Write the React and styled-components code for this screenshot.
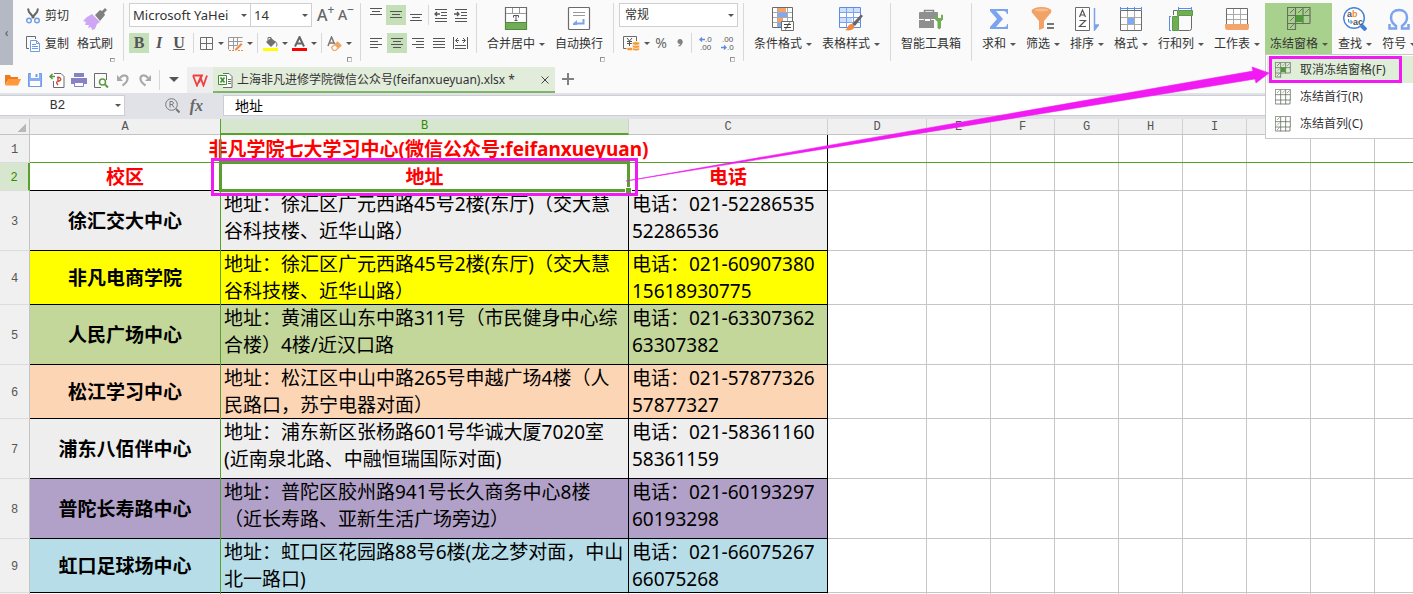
import React, { useState } from "react";
import styled, { createGlobalStyle } from "styled-components";

const fonts = [
  { label: "Microsoft YaHei", width: 122 },
  { label: "14", width: 62 },
];

const columns = [
  { name: "A", width: 191 },
  { name: "B", width: 408 },
  { name: "C", width: 199 },
  { name: "D", width: 99 },
  { name: "E", width: 64 },
  { name: "F", width: 64 },
  { name: "G", width: 64 },
  { name: "H", width: 64 },
  { name: "I", width: 64 },
  { name: "J", width: 64 },
  { name: "K", width: 64 },
  { name: "L" },
];

const extraColumns = columns.slice(3);

const centers = [
  {
    name: "徐汇交大中心",
    address: ["地址：徐汇区广元西路45号2楼(东厅)（交大慧", "谷科技楼、近华山路）"],
    phone: ["电话：021-52286535", "52286536"],
    color: "#eeeeee",
    height: 60,
  },
  {
    name: "非凡电商学院",
    address: ["地址：徐汇区广元西路45号2楼(东厅)（交大慧", "谷科技楼、近华山路）"],
    phone: ["电话：021-60907380", "15618930775"],
    color: "#ffff00",
    height: 54,
  },
  {
    name: "人民广场中心",
    address: ["地址：黄浦区山东中路311号（市民健身中心综", "合楼）4楼/近汉口路"],
    phone: ["电话：021-63307362", "63307382"],
    color: "#c4d79b",
    height: 60,
  },
  {
    name: "松江学习中心",
    address: ["地址：松江区中山中路265号申越广场4楼（人", "民路口，苏宁电器对面）"],
    phone: ["电话：021-57877326", "57877327"],
    color: "#fcd5b4",
    height: 54,
  },
  {
    name: "浦东八佰伴中心",
    address: ["地址：浦东新区张杨路601号华诚大厦7020室", "(近南泉北路、中融恒瑞国际对面)"],
    phone: ["电话：021-58361160", "58361159"],
    color: "#eeeeee",
    height: 60,
  },
  {
    name: "普陀长寿路中心",
    address: ["地址：普陀区胶州路941号长久商务中心8楼", "（近长寿路、亚新生活广场旁边）"],
    phone: ["电话：021-60193297", "60193298"],
    color: "#b1a0c7",
    height: 60,
  },
  {
    name: "虹口足球场中心",
    address: ["地址：虹口区花园路88号6楼(龙之梦对面，中山", "北一路口)"],
    phone: ["电话：021-66075267", "66075268"],
    color: "#b7dee8",
    height: 54,
  },
];

/* ---------- icons ---------- */

const Icon = ({ size = 16, height, children }) => (
  <svg
    width={size}
    height={height || size}
    viewBox={`0 0 ${size} ${height || size}`}
    fill="none"
    stroke="#6b6b6b"
    strokeWidth="1"
    aria-hidden="true"
  >
    {children}
  </svg>
);

const CutIcon = () => (
  <Icon size={14} height={16}>
    <path d="M2 .5 3 4l5 6M12 .5 11 4l-5 6" stroke="#666" strokeWidth="2" />
    <circle cx="3" cy="12.5" r="2.3" stroke="#6f9be8" strokeWidth="1.4" />
    <circle cx="11" cy="12.5" r="2.3" stroke="#6f9be8" strokeWidth="1.4" />
  </Icon>
);

const CopyIcon = () => (
  <Icon size={14} height={16}>
    <path d="M3 12.500H.5V.5H9.500V3" />
    <path d="M4.500 4.500h6l3 3v8h-9z" fill="#fff" stroke="#6f9be8" />
    <path d="M10.500 4.500v3h3M6 8.500h4M6 10.500h6M6 12.500h6" stroke="#6f9be8" />
  </Icon>
);

const BrushIcon = () => (
  <Icon size={24}>
    <path d="m12 8 5-5 2 1 3-3 2 2-3 3 1 2-5 6z" fill="#808080" stroke="none" />
    <path d="m9 7 8 8-3 2-2 5-3 1-1-3-3 1 1-3-4 0 1-3-3-1 4-4z" fill="#cfa6f5" stroke="none" />
  </Icon>
);

const BordersIcon = () => (
  <Icon size={15}>
    <path d="M1.500 1.500h12v12h-12zM7.500 1.500v12M1.500 7.500h12" />
  </Icon>
);

const DrawBorderIcon = () => (
  <Icon size={15}>
    <path d="M.5 13.500V1.500h14M.5 5.500h14M.5 9.500h9M5.500 1.500v12M9.500 1.500v8" stroke="#999" />
    <path d="m7 13 6-6 1.500 1.500-6 6H7z" fill="#f08a4b" stroke="none" />
    <path d="M1 14.500h5M10 14.500h5" stroke="#f08a4b" strokeDasharray="2 1" />
  </Icon>
);

const FillIcon = () => (
  <Icon size={15}>
    <path d="m3 6 5-4 5 4-5 5z" fill="#707070" stroke="none" />
    <path d="M5 5V1.500h3V5M12.500 5.500c1 1 2 3 1 5" stroke="#707070" />
    <path d="M0 13.500h15" stroke="#ff0" strokeWidth="3" />
  </Icon>
);

const FontColorIcon = () => (
  <Icon size={15}>
    <path d="M3 10.500 7.500 1l4.500 9.500M4.500 7.500h6" stroke="#666" strokeWidth="2" />
    <path d="M0 13.500h15" stroke="#f00" strokeWidth="3" />
  </Icon>
);

const EraserIcon = () => (
  <Icon size={15}>
    <path d="M1 10 4.500 1l3 7M2.500 7h4" stroke="#777" strokeWidth="1.500" />
    <path d="m4.500 11.500 6-5.500 3.500 3.500-5.500 5h-2z" fill="#fff" stroke="#f0a560" strokeWidth="1.200" />
    <path d="m7.500 9 3-3 3.500 3.500-3 3z" fill="#f0a560" stroke="none" />
  </Icon>
);

const LinesIcon = ({ rows }) => (
  <Icon size={14} height={14}>
    {rows.map(([x, y, w]) => (
      <path key={y} d={`M${x} ${y}.5h${w}`} stroke="#555" />
    ))}
  </Icon>
);

const topLines = [[1, 0, 12], [3, 3, 8], [1, 6, 12]];
const middleLines = [[1, 3, 12], [3, 6, 8], [1, 9, 12]];
const bottomLines = [[1, 6, 12], [3, 9, 8], [1, 12, 12]];
const leftLines = [[1, 2, 12], [1, 5, 8], [1, 8, 12], [1, 11, 8]];
const centerLines = [[1, 2, 12], [3, 5, 8], [1, 8, 12], [3, 11, 8]];
const rightLines = [[1, 2, 12], [5, 5, 8], [1, 8, 12], [5, 11, 8]];
const justifyLines = [[1, 2, 12], [1, 5, 12], [1, 8, 12], [1, 11, 12]];

const IndentIcon = ({ right }) => (
  <Icon size={14} height={14}>
    <path d="M1 1.500h12M7 4.500h6M7 7.500h6M1 10.500h12M1 13.500h12" stroke="#555" />
    <path d={right ? "M0 6h5M3 4l2 2-2 2" : "M6 6H1M3 4 1 6l2 2"} stroke="#555" strokeWidth="1.300" />
  </Icon>
);

const DistributeIcon = () => (
  <Icon size={15} height={14}>
    <path d="M.5 1v12M14.500 1v12M3 4.500h3M9 4.500h3M5 2 2.500 4.500 5 7M10 2l2.500 2.500L10 7M2 9.500h11M2 12.500h11" stroke="#555" />
  </Icon>
);

const MergeIcon = () => (
  <Icon size={24}>
    <path d="M1.500.5h21v22h-21z" fill="#fff" strokeWidth="1.200" />
    <path d="M2 6.500h20M8.500 1v5M15.500 1v5" stroke="#999" />
    <path d="M9.500 10.500v-2h5v2M12 8.500v5M10.500 13.500h3" stroke="#555" />
    <path d="M1.500 15.500h21v7h-21z" fill="#70ad56" stroke="#4c8f38" />
  </Icon>
);

const WrapIcon = () => (
  <Icon size={24}>
    <rect x="1.500" y=".5" width="21" height="22" rx="1" fill="#fff" strokeWidth="1.200" />
    <path d="M6 5.500h12M6 8.500h12" stroke="#999" />
    <path d="M16.500 12v4.500H10" stroke="#7ba3ee" strokeWidth="2" />
    <path d="M6 16.500l4-3.500v5H6z" fill="#7ba3ee" stroke="none" />
  </Icon>
);

const CurrencyIcon = () => (
  <Icon size={17}>
    <path d="M13.500 6V1.500H.5v12H5" />
    <path d="m4 3 2.500 3L9 3M6.500 6v5M4 6.500h5M4 8.500h5" stroke="#555" />
    <g fill="#f29a38" stroke="#fff" strokeWidth=".7">
      <ellipse cx="7" cy="14" rx="3.500" ry="1.800" />
      <ellipse cx="13" cy="14" rx="3.700" ry="1.900" />
      <ellipse cx="13" cy="11.500" rx="3.700" ry="1.900" />
      <ellipse cx="13" cy="8.500" rx="3.700" ry="1.900" />
    </g>
  </Icon>
);

const CommaIcon = () => (
  <Icon size={6} height={10}>
    <circle cx="3" cy="3.500" r="2.500" fill="#808080" stroke="none" />
    <path d="M5 3.500q0 3.500-3.500 4.500" stroke="#808080" strokeWidth="1.300" />
  </Icon>
);

const DecimalIcon = ({ more }) => (
  <Icon size={13} height={16}>
    <g fill="#555" stroke="none" fontFamily="Liberation Sans" fontSize="8">
      <text x={more ? 6 : 1} y="7">{more ? ".0" : ".00"}</text>
      <text x={more ? 1 : 6} y="15">{more ? ".00" : ".0"}</text>
    </g>
    <path
      d={more ? "M6 4.500H1M3 2.500l-2 2 2 2" : "M0 12.500h5M3 10.500l2 2-2 2"}
      stroke="#5b8de8"
      strokeWidth="1.300"
    />
  </Icon>
);

const ConditionIcon = () => (
  <Icon size={24}>
    <path d="M1.500.5h20v20h-20z" fill="#fff" />
    <path d="M7 1h8v5H7z" fill="#f3a268" stroke="none" />
    <path d="M7 6h9v5H7z" fill="#7fa9f5" stroke="none" />
    <path d="M7 11h5v5H7z" fill="#f3a268" stroke="none" />
    <path d="M7 16h4v4H7z" fill="#7fa9f5" stroke="none" />
    <path d="M6.500 1v19M16.500 1v19M2 5.500h19M2 10.500h19M2 15.500h19" stroke="#aaa" />
    <path d="M10.500 14.500h12v9h-12z" fill="#fff" />
    <path d="M13 17.500h7M13 20.500h7M18.500 15.500l-4 7" stroke="#444" />
  </Icon>
);

const TableStyleIcon = () => (
  <Icon size={24}>
    <path d="M.5.5h21v20H.5z" fill="#fff" stroke="#5b8de8" />
    <path d="M1 1h20v5H1zM1 11h12v5H1z" fill="#cfdffb" stroke="none" />
    <path d="M7.500 1v19M14.500 1v19M1 5.500h20M1 10.500h20M1 15.500h20" stroke="#7ba3ee" />
    <path d="m13 17 9-9.500 2 1.500-8 10z" fill="#666" stroke="none" />
    <path d="M12 17c2 0 4 1 3 4-1 2-5 3-9 2 3-1 2-5 6-6z" fill="#ee8a44" stroke="none" />
  </Icon>
);

const ToolboxIcon = () => (
  <Icon size={24}>
    <path d="M5.500 6V3.500h9V6" strokeWidth="1.500" stroke="#888" />
    <path d="M0 6q0-1 1-1h17q1 0 1 1v6H0zM0 13h15v8H0z" fill="#8f8f8f" stroke="none" />
    <path d="M5.500 11.500h6v3h-6z" fill="#fff" stroke="#8f8f8f" />
    <path d="M16.500 8v4.500l2.500 2v6.500q1.200 1.500 2.500 0v-6.500l2-2V8h-1v3.500h-4.500V8z" fill="#70ad56" stroke="#70ad56" />
  </Icon>
);

const SumIcon = () => (
  <Icon size={24}>
    <path d="M3 2h18v5h-1c-1-3-2-3-5-3H9l7 8-7 8h6c3 0 5 0 5-3h1v5H3v-2l7-8-7-8z" fill="#7ba3ee" stroke="none" />
  </Icon>
);

const FilterIcon = () => (
  <Icon size={24}>
    <ellipse cx="10.500" cy="4" rx="10" ry="4" fill="#f0a267" stroke="none" />
    <path d="M.5 5 8 14v9l5-2v-7l7.500-9z" fill="#f0a267" stroke="none" />
    <ellipse cx="10.500" cy="3" rx="7" ry="1.500" fill="#f7bd8e" stroke="none" />
    <path d="M16 17h7M16 21h7" stroke="#777" strokeWidth="2" />
  </Icon>
);

const SortIcon = () => (
  <Icon size={24}>
    <path d="M.5.5h14v23H.5z" fill="#fff" />
    <path d="m4.500 10 3-7 3 7M5.500 8h4M4.500 13.500h6l-6 6h6.500" stroke="#555" strokeWidth="1.200" />
    <path d="M19.500 1v22l4-5h-4" stroke="#7ba3ee" strokeWidth="1.500" fill="#7ba3ee" />
  </Icon>
);

const FormatIcon = () => (
  <Icon size={24}>
    <path d="M1.500 3.500h21v20h-21z" fill="#fff" />
    <path d="M8.500 4v19M15.500 4v19M2 10.500h20M2 17.500h20" stroke="#aaa" />
    <path d="M9 11h6v6H9z" fill="#7fa9f5" stroke="none" />
    <path d="M1 1.500h22M1.500 0v3M8.500 0v3M15.500 0v3M22.500 0v3" stroke="#5b8de8" />
  </Icon>
);

const RowColIcon = () => (
  <Icon size={24}>
    <path d="M8 3.500H4.500V8M22.500 9v12.500q0 2-2 2H10" />
    <path d="M8.500 3.500h15v5h-15zM3.500 9.500h6v14h-6z" fill="#70ad56" stroke="#5d9c43" />
    <path d="M9 1.500h14M9.500 0v3M22.500 0v3M.5 9v14M0 9.500h2M0 23.500h2" stroke="#5b8de8" />
  </Icon>
);

const WorksheetIcon = () => (
  <Icon size={24}>
    <path d="M1.500 1.500h21v19h-21z" fill="#fff" />
    <path d="M8.500 2v16M15.500 2v16M2 7.500h20M2 12.500h20" stroke="#aaa" />
    <path d="M0 17h24v3q0 3-2 3H2q-2 0-2-3z" fill="#f3a56e" stroke="none" />
  </Icon>
);

const FreezeIcon = ({ size = 24, rows = true, cols = true, mark = true }) => (
  <svg width={size} height={size} viewBox="0 0 24 24" fill="none" stroke="#66705f" strokeWidth="1.200" aria-hidden="true">
    <path d="M23 16.500V.5H.5v22H9M9 16.500h14M.5 8.500h22M.5 16.500H9M8.500 1v22M16 1v16" />
    {rows && <path d="m3 6 4-4M11 6l4-4M18 6l4-4" strokeWidth=".9" />}
    {cols && <path d="m3 14 4-4M3 21l4-4M3 6l4-4" strokeWidth=".9" />}
    {!mark && <path d="M9 22.500h13.500V16M16 17v6" />}
    {mark && <path d="M9 8h7v7H9z" fill="#4f9a38" stroke="none" />}
  </svg>
);

const FindIcon = () => (
  <Icon size={24}>
    <path d="m18 18 5 5" stroke="#3f7fdc" strokeWidth="4" />
    <circle cx="11" cy="11" r="10.300" fill="#fff" stroke="#4a86dc" strokeWidth="1.500" />
    <g stroke="none" fontFamily="Liberation Sans" fontWeight="bold" fontSize="9">
      <text x="4" y="10" fill="#555">a</text>
      <text x="9" y="10" fill="#ee8a44">b</text>
      <text x="10" y="18" fill="#555">ac</text>
    </g>
    <path d="M5.500 12v3H9M7.500 13l2 2-2 2" stroke="#4a86dc" />
  </Icon>
);

const SymbolIcon = () => (
  <Icon size={24}>
    <path d="M2.500 17v4.500H9V19C5 16 4 13.500 4 10.500 4 6 7 3 12 3s8 3 8 7.500c0 3-1 5.500-5 8.500v2.500h6.500V17" stroke="#7ba3ee" strokeWidth="2.500" />
  </Icon>
);

const OpenIcon = () => (
  <Icon>
    <path d="M0 13V3h5l1 2h7v2H4z" fill="#ee7a1c" stroke="none" />
    <path d="M0 13.500 4 7h12l-3 6.500z" fill="#ff9838" stroke="none" />
  </Icon>
);

const SaveIcon = () => (
  <Icon>
    <path d="M1.500 1.500h13v13h-13z" fill="#8ab0f2" stroke="#6f9be8" />
    <path d="M4 1h8v5H4zM3 9h10v5H3z" fill="#fff" stroke="none" />
    <path d="M9.500 2v3" stroke="#6f9be8" strokeWidth="2" />
  </Icon>
);

const PdfIcon = () => (
  <Icon>
    <path d="M5 1.500h7l3 3v11H4.500V9" fill="#fff" />
    <path d="M8 5.500c4-1 5 3 2 3.500S7 11 9 13M9 6v4" stroke="#d04a3c" strokeWidth="1.400" />
    <path d="M6 4.500H1M3.500 2 1 4.500 3.500 7" stroke="#4f9a38" strokeWidth="1.500" />
  </Icon>
);

const PrintIcon = () => (
  <Icon>
    <path d="M3 1h10v4H3zM0 6h16v6H0z" fill="#8782c4" stroke="none" />
    <path d="M3.500 10.500h9v4h-9z" fill="#fff" stroke="#8782c4" />
    <path d="M3 5.500h10" stroke="#fff" />
  </Icon>
);

const PreviewIcon = () => (
  <Icon>
    <path d="M13.500 8V1.500h-12v14H8" />
    <circle cx="9.500" cy="10" r="3" fill="#fff" stroke="#5d9c43" strokeWidth="1.500" />
    <path d="m12 12.500 3 3" stroke="#5d9c43" strokeWidth="2" />
  </Icon>
);

const UndoIcon = ({ flip }) => (
  <Icon>
    <g transform={flip ? "matrix(-1 0 0 1 16 0)" : undefined}>
      <path d="M5 6c3-4 8-3 7.500 1-.3 3-2 4.500-5 6.500" stroke="#a8a8a8" strokeWidth="2.200" />
      <path d="M2 3v6h6z" fill="#a8a8a8" stroke="none" />
    </g>
  </Icon>
);

const WpsIcon = () => (
  <Icon size={16} height={13}>
    <path d="m1 1.500 4 10 3.500-8 3 8 3.500-10M1 1.500h9l-3 7" stroke="#ee4040" strokeWidth="1.800" />
  </Icon>
);

const SheetFileIcon = () => (
  <Icon size={15}>
    <path d="M5 .5h6l3 3v11H5" fill="#fff" />
    <path d="M10 6.500h3M10 8.500h3M10 10.500h3" />
    <path d="M.5 2.500h8v9h-8z" fill="#fff" stroke="#3f8f32" />
    <path d="m2.500 4.500 4 5M6.500 4.500l-4 5" stroke="#3f8f32" strokeWidth="1.700" />
  </Icon>
);

const LookupIcon = () => (
  <Icon size={15}>
    <circle cx="6.500" cy="6.500" r="5.800" stroke="#777" />
    <path d="m11 11 3.500 3.500" stroke="#777" strokeWidth="2" />
    <path d="M5 9.500v-6h2.500q2 1.500 0 3H5M7 6.500l2 3" stroke="#777" />
  </Icon>
);

const CloseIcon = () => (
  <Icon size={8}>
    <path d="m.5.5 7 7M7.500.5l-7 7" stroke="#444" />
  </Icon>
);

const PlusIcon = () => (
  <Icon size={12}>
    <path d="M6 0v12M0 6h12" stroke="#808080" strokeWidth="2" />
  </Icon>
);

/* ---------- parts ---------- */

const actions = [
  { label: "求和", icon: <SumIcon /> },
  { label: "筛选", icon: <FilterIcon /> },
  { label: "排序", icon: <SortIcon /> },
  { label: "格式", icon: <FormatIcon /> },
  { label: "行和列", icon: <RowColIcon /> },
  { label: "工作表", icon: <WorksheetIcon /> },
];

const quickActions = [
  { label: "打开", icon: <OpenIcon /> },
  { label: "保存", icon: <SaveIcon /> },
  { label: "输出为PDF", icon: <PdfIcon /> },
  { label: "打印", icon: <PrintIcon /> },
  { label: "打印预览", icon: <PreviewIcon /> },
  { label: "撤销", icon: <UndoIcon /> },
  { label: "恢复", icon: <UndoIcon flip /> },
];

const Action = ({ label, icon, caret = true, active, onClick }) => (
  <LargeButton type="button" $active={active} onClick={onClick}>
    {icon}
    <LargeLabel>
      {label}
      {caret && <Caret />}
    </LargeLabel>
  </LargeButton>
);

const Split = ({ label, children }) => (
  <SplitButton type="button" aria-label={label}>
    {children}
    <Caret />
  </SplitButton>
);

const Dropdown = ({ label, value, width, indent, large }) => (
  <SelectBox $width={width}>
    <Select aria-label={label} defaultValue={value} $indent={indent} $large={large}>
      <option>{value}</option>
    </Select>
    <SelectCaret />
  </SelectBox>
);

const Ribbon = () => {
  const [menuOpen, setMenuOpen] = useState(true);

  return (
    <RibbonBar>
      <Collapse type="button" aria-label="折叠">‹</Collapse>
      <Group $width={110}>
        <Clipboard>
          <ClipColumn>
            <ClipButton type="button"><CutIcon />剪切</ClipButton>
            <ClipButton type="button"><CopyIcon />复制</ClipButton>
          </ClipColumn>
          <Action label="格式刷" icon={<BrushIcon />} caret={false} />
        </Clipboard>
        <Launcher />
      </Group>
      <Divider />

      <Group $width={236}>
        <ToolRow $top>
          <FontSelects>
            {fonts.map((font) => (
              <Dropdown
                key={font.label}
                label={font.label === "14" ? "字号" : "字体"}
                value={font.label}
                width={font.width}
                indent={3}
                large
              />
            ))}
          </FontSelects>
          <SizeButton type="button" aria-label="增大字号">A<sup>+</sup></SizeButton>
          <SizeButton type="button" aria-label="减小字号" $small>A<sup>−</sup></SizeButton>
        </ToolRow>
        <ToolRow $gap={4}>
          <Tools>
            <Tool type="button" $active $letter><b>B</b></Tool>
            <Tool type="button" $letter><i>I</i></Tool>
            <Tool type="button" $letter><u>U</u></Tool>
          </Tools>
          <ShortDivider />
          <Split label="边框"><BordersIcon /></Split>
          <Split label="绘制边框"><DrawBorderIcon /></Split>
          <ShortDivider />
          <Split label="填充颜色"><FillIcon /></Split>
          <Split label="字体颜色"><FontColorIcon /></Split>
          <ShortDivider />
          <Split label="清除"><EraserIcon /></Split>
        </ToolRow>
        <Launcher />
      </Group>
      <Divider />

      <Group $width={115}>
        <ToolRow $top>
          <Tools>
            <Tool type="button" aria-label="顶端对齐"><LinesIcon rows={topLines} /></Tool>
            <Tool type="button" aria-label="垂直居中" $active><LinesIcon rows={middleLines} /></Tool>
            <Tool type="button" aria-label="底端对齐"><LinesIcon rows={bottomLines} /></Tool>
          </Tools>
          <ShortDivider $spaced />
          <Tools>
            <Tool type="button" aria-label="减少缩进"><IndentIcon /></Tool>
            <Tool type="button" aria-label="增加缩进"><IndentIcon right /></Tool>
          </Tools>
        </ToolRow>
        <ToolRow>
          <Tools $gap={1}>
            <Tool type="button" aria-label="左对齐"><LinesIcon rows={leftLines} /></Tool>
            <Tool type="button" aria-label="水平居中" $active><LinesIcon rows={centerLines} /></Tool>
            <Tool type="button" aria-label="右对齐"><LinesIcon rows={rightLines} /></Tool>
            <Tool type="button" aria-label="两端对齐"><LinesIcon rows={justifyLines} /></Tool>
            <Tool type="button" aria-label="分散对齐"><DistributeIcon /></Tool>
          </Tools>
        </ToolRow>
      </Group>
      <Divider $short />

      <Group $width={136}>
        <Actions>
          <Action label="合并居中" icon={<MergeIcon />} />
          <Action label="自动换行" icon={<WrapIcon />} caret={false} />
        </Actions>
        <Launcher />
      </Group>
      <Divider $short />

      <Group $width={129}>
        <ToolRow $top>
          <Dropdown label="数字格式" value="常规" width={119} indent={5} />
        </ToolRow>
        <NumberRow>
          <Split label="货币"><CurrencyIcon /></Split>
          <NumberButton type="button">%</NumberButton>
          <NumberButton type="button" aria-label="千位分隔"><CommaIcon /></NumberButton>
          <ShortDivider />
          <NumberButton type="button" aria-label="增加小数位数" $wide><DecimalIcon more /></NumberButton>
          <NumberButton type="button" aria-label="减少小数位数" $wide><DecimalIcon /></NumberButton>
        </NumberRow>
        <Launcher />
      </Group>
      <Divider />

      <Group $width={146}>
        <Actions>
          <Action label="条件格式" icon={<ConditionIcon />} />
          <Action label="表格样式" icon={<TableStyleIcon />} />
        </Actions>
      </Group>
      <Divider />

      <Group $width={80}>
        <Actions>
          <Action label="智能工具箱" icon={<ToolboxIcon />} caret={false} />
        </Actions>
      </Group>
      <Divider />

      <Actions>
        {actions.map((item) => (
          <Action key={item.label} label={item.label} icon={item.icon} />
        ))}
        <MenuAnchor>
          <Action
            label="冻结窗格"
            icon={<FreezeIcon />}
            active
            onClick={() => setMenuOpen(!menuOpen)}
          />
          {menuOpen && (
            <Menu>
              <MenuItem type="button" $active>
                <FreezeIcon size={16} />取消冻结窗格(F)
              </MenuItem>
              <MenuItem type="button">
                <FreezeIcon size={16} cols={false} mark={false} />冻结首行(R)
              </MenuItem>
              <MenuItem type="button">
                <FreezeIcon size={16} rows={false} mark={false} />冻结首列(C)
              </MenuItem>
            </Menu>
          )}
        </MenuAnchor>
        <Action label="查找" icon={<FindIcon />} />
        <Action label="符号" icon={<SymbolIcon />} />
      </Actions>
    </RibbonBar>
  );
};

const TabBar = () => (
  <Tabs>
    <QuickBar>
      {quickActions.map((item) => (
        <IconButton key={item.label} type="button" aria-label={item.label}>
          {item.icon}
        </IconButton>
      ))}
      <ShortDivider />
    </QuickBar>
    <MoreButton type="button" aria-label="更多"><Caret $large /></MoreButton>
    <HomeTab type="button" aria-label="首页"><WpsIcon /></HomeTab>
    <FileTab>
      <SheetFileIcon />
      <FileName>上海非凡进修学院微信公众号(feifanxueyuan).xlsx *</FileName>
      <IconButton type="button" aria-label="关闭"><CloseIcon /></IconButton>
    </FileTab>
    <IconButton type="button" aria-label="新建"><PlusIcon /></IconButton>
  </Tabs>
);

const FormulaBar = () => (
  <Formula>
    <NameBox>
      <NameInput aria-label="名称框" defaultValue="B2" />
      <Caret />
    </NameBox>
    <FormulaTools>
      <IconButton type="button" aria-label="查找函数"><LookupIcon /></IconButton>
      <FxButton type="button">fx</FxButton>
    </FormulaTools>
    <FormulaInput aria-label="编辑栏" defaultValue="地址" />
  </Formula>
);

const Lines = ({ lines }) => (
  <CellText>
    {lines.map((line) => (
      <span key={line}>{line}</span>
    ))}
  </CellText>
);

const BlankCells = () => extraColumns.map((col) => <Blank key={col.name} />);

const Sheet = () => (
  <SheetArea>
    <Grid>
      <colgroup>
        <RowHeadCol />
        {columns.map((col) => (
          <Col key={col.name} $width={col.width} />
        ))}
      </colgroup>
      <thead>
        <Row $height={16}>
          <Corner aria-label="全选" />
          {columns.map((col) => (
            <ColHead key={col.name} scope="col" $active={col.name === "B"}>
              {col.name}
            </ColHead>
          ))}
        </Row>
      </thead>
      <tbody>
        <Row $height={28}>
          <RowHead scope="row">1</RowHead>
          <TitleCell colSpan={3}>非凡学院七大学习中心(微信公众号:feifanxueyuan)</TitleCell>
          <BlankCells />
        </Row>
        <Row $height={28}>
          <RowHead scope="row" $active>2</RowHead>
          <TitleCell>校区</TitleCell>
          <SelectedCell>地址<FillHandle /></SelectedCell>
          <TitleCell>电话</TitleCell>
          <BlankCells />
        </Row>
        {centers.map((center, index) => (
          <Row key={center.name} $height={center.height}>
            <RowHead scope="row">{index + 3}</RowHead>
            <NameCell $color={center.color}>{center.name}</NameCell>
            <Cell $color={center.color}><Lines lines={center.address} /></Cell>
            <Cell $color={center.color}><Lines lines={center.phone} /></Cell>
            <BlankCells />
          </Row>
        ))}
        <Row $height={28}>
          <RowHead scope="row" />
          <Blank />
          <Blank />
          <Blank />
          <BlankCells />
        </Row>
      </tbody>
    </Grid>
    <FreezeColumnLine />
    <FreezeRowLine />
  </SheetArea>
);

const Annotations = () => (
  <Overlay width="1413" height="200" viewBox="0 0 1413 200" aria-hidden="true">
    <g fill="none" stroke="#f21af2" strokeWidth="3">
      <path d="M212.500 159.500h424v35h-424z" />
      <path d="M1270.500 57.500h130v24h-130z" />
    </g>
    <path d="m626 181 627-110-1-4 17 6-13 10-1-4z" fill="#f21af2" stroke="#f21af2" strokeWidth=".6" />
  </Overlay>
);

const App = () => (
  <>
    <GlobalStyle />
    <Page>
      <Ribbon />
      <TabBar />
      <FormulaBar />
      <Sheet />
      <Annotations />
    </Page>
  </>
);

export default App;

/* ---------- styles ---------- */

const GlobalStyle = createGlobalStyle`
  * {
    box-sizing: border-box;
  }

  body {
    margin: 0;
    overflow: hidden;
    background: #fff;
    color: #333;
    font: 12px/18px "Noto Sans", "Noto Sans CJK SC", sans-serif;
    text-spacing-trim: space-all;
  }

  button, input, select {
    margin: 0;
    padding: 0;
    border: 0;
    background: none;
    color: inherit;
    font: inherit;
  }

  button {
    cursor: pointer;
  }

  svg {
    display: block;
    flex-shrink: 0;
  }
`;

const Page = styled.div`
  position: relative;
  display: flex;
  flex-direction: column;
  height: 100vh;
  overflow: hidden;
`;

const RibbonBar = styled.div`
  display: flex;
  flex-shrink: 0;
  height: 65px;
  background: #fafafa;
  white-space: nowrap;
`;

const Collapse = styled.button`
  width: 13px;
  flex-shrink: 0;
  background: #b5b9c4;
  color: #555;
`;

const Group = styled.div`
  display: flex;
  flex-direction: column;
  flex-shrink: 0;
  width: ${({ $width }) => $width}px;
`;

const Divider = styled.div`
  width: 1px;
  height: ${({ $short }) => ($short ? 50 : 58)}px;
  margin-top: 3px;
  flex-shrink: 0;
  background: #d8d8d8;
`;

const ShortDivider = styled.div`
  width: 1px;
  height: 20px;
  margin: 0 ${({ $spaced }) => ($spaced ? 2 : 1)}px 0 ${({ $spaced }) => ($spaced ? 2 : 0)}px;
  flex-shrink: 0;
  background: #d8d8d8;
`;

const Launcher = styled.button.attrs({ type: "button", "aria-label": "更多设置" })`
  align-self: flex-end;
  width: 5px;
  height: 5px;
  margin: auto 8px 3px 0;
  border: 1px solid #909090;
  border-right-color: #c8c8c8;
  border-bottom-color: #c8c8c8;
`;

const Caret = styled.span`
  width: 0;
  height: 0;
  flex-shrink: 0;
  border-style: solid;
  border-color: #555 transparent transparent;
  border-width: ${({ $large }) => ($large ? "5px 5px 0" : "3px 3px 0")};
`;

const Clipboard = styled.div`
  display: flex;
  gap: 3px;
  padding-left: 13px;
`;

const ClipColumn = styled.div`
  display: flex;
  flex-direction: column;
  padding-top: 2px;
`;

const ClipButton = styled.button`
  display: flex;
  align-items: center;
  gap: 5px;
  height: 28px;
`;

const LargeButton = styled.button`
  display: flex;
  flex-direction: column;
  align-items: center;
  gap: 4px;
  height: 51px;
  margin-top: 3px;
  padding: 4px 5px 0;
  background: ${({ $active }) => ($active ? "#a9d18e" : "none")};
`;

const LargeLabel = styled.span`
  display: flex;
  align-items: center;
  gap: 4px;

  ${Caret} {
    margin-right: -1px;
  }
`;

const Actions = styled.div`
  display: flex;
  align-items: flex-start;
  gap: 1px;
  padding-left: 5px;
`;

const MenuAnchor = styled.div`
  position: relative;
`;

const ToolRow = styled.div`
  display: flex;
  align-items: center;
  gap: ${({ $gap }) => $gap || 0}px;
  height: ${({ $top }) => ($top ? 30 : 26)}px;
  padding-left: 5px;
`;

const FontSelects = styled.div`
  display: flex;
  margin-right: 5px;
`;

const SelectBox = styled.div`
  position: relative;
  width: ${({ $width }) => $width}px;
  height: 24px;
  border: 1px solid #cfcfcf;
  background: #fff;

  & + & {
    margin-left: -1px;
  }
`;

const Select = styled.select`
  appearance: none;
  width: 100%;
  height: 22px;
  padding-left: ${({ $indent }) => $indent}px;
  font-size: ${({ $large }) => ($large ? 13 : 12)}px;
`;

const SelectCaret = styled(Caret)`
  position: absolute;
  top: 10px;
  right: 3px;
  pointer-events: none;
`;

const SizeButton = styled.button`
  display: flex;
  align-items: center;
  width: 21px;
  height: 20px;
  color: #666;
  font-size: ${({ $small }) => ($small ? 14 : 16)}px;
  font-weight: 500;

  sup {
    margin-top: -10px;
    font-size: 12px;
    line-height: 12px;
  }
`;

const Tools = styled.div`
  display: flex;
  gap: ${({ $gap }) => $gap || 0}px;
`;

const Tool = styled.button`
  display: flex;
  align-items: center;
  justify-content: center;
  width: 20px;
  height: 20px;
  background: ${({ $active }) => ($active ? "#c5e0b8" : "none")};
  color: #555;
  font-family: ${({ $letter }) => ($letter ? '"Liberation Serif", serif' : "inherit")};
  font-size: 16px;
  font-weight: bold;
`;

const SplitButton = styled.button`
  display: flex;
  align-items: center;
  gap: 4px;
  height: 20px;
`;

const NumberRow = styled.div`
  display: flex;
  align-items: center;
  gap: 3px;
  height: 26px;
  padding-left: 9px;
`;

const NumberButton = styled.button`
  display: flex;
  align-items: center;
  justify-content: center;
  width: ${({ $wide }) => ($wide ? 19 : 16)}px;
  color: #666;
  font-size: 14px;
`;

const Menu = styled.div`
  position: absolute;
  top: 100%;
  left: 0;
  z-index: 5;
  display: flex;
  flex-direction: column;
  width: 180px;
  padding: 1px;
  border: 1px solid #c9c9c9;
  background: #fff;
`;

const MenuItem = styled.button`
  display: flex;
  align-items: center;
  gap: 9px;
  height: 27px;
  padding-left: 8px;
  background: ${({ $active }) => ($active ? "#dfeed8" : "none")};
`;

const Tabs = styled.div`
  display: flex;
  align-items: center;
  flex-shrink: 0;
  height: 28px;
  background: #fafafa;
`;

const QuickBar = styled.div`
  display: flex;
  align-items: center;
  gap: 6px;
  padding: 2px 0 0 5px;
`;

const IconButton = styled.button`
  display: flex;
  align-items: center;
  justify-content: center;
  width: 16px;
  height: 20px;
  flex-shrink: 0;
`;

const MoreButton = styled.button`
  display: flex;
  align-items: center;
  justify-content: center;
  width: 26px;
  height: 20px;
`;

const HomeTab = styled.button`
  display: flex;
  align-items: center;
  justify-content: center;
  align-self: flex-end;
  width: 26px;
  height: 26px;
  background: #eeeeee;
`;

const FileTab = styled.div`
  display: flex;
  align-items: center;
  gap: 4px;
  align-self: flex-end;
  width: 342px;
  height: 26px;
  margin-right: 5px;
  padding: 2px 2px 0 5px;
  border-bottom: 2px solid #7fb567;
  background: #e2ecda;
`;

const FileName = styled.span`
  flex: 1;
  white-space: nowrap;
`;

const Formula = styled.div`
  display: flex;
  flex-shrink: 0;
  height: 26px;
  padding: 2px 0 3px;
  background: #e1e2e7;
`;

const NameBox = styled.div`
  display: flex;
  align-items: center;
  width: 125px;
  padding-right: 3px;
  border: 1px solid #cdced4;
  border-left: 0;
  background: #fff;
`;

const NameInput = styled.input`
  flex: 1;
  min-width: 0;
  font-family: "Liberation Mono", monospace;
  font-size: 13px;
  text-align: center;
`;

const FormulaTools = styled.div`
  display: flex;
  align-items: center;
  justify-content: flex-end;
  gap: 9px;
  width: 98px;
  padding-right: 20px;
`;

const FxButton = styled.button`
  color: #666;
  font: italic bold 16px "Liberation Serif", serif;
`;

const FormulaInput = styled.input`
  flex: 1;
  padding-left: 11px;
  border: 1px solid #cdced4;
  border-right: 0;
  background: #fff;
  color: #000;
  font-size: 14px;
`;

const SheetArea = styled.div`
  position: relative;
  flex: 1;
  min-height: 0;
  overflow: hidden;
`;

const Grid = styled.table`
  width: 100%;
  min-width: 1400px;
  table-layout: fixed;
  border-collapse: separate;
  border-spacing: 0;
  color: #000;
  font-size: 19px;
  line-height: 27px;
`;

const RowHeadCol = styled.col`
  width: 30px;
`;

const Col = styled.col`
  width: ${({ $width }) => ($width ? `${$width}px` : "auto")};
`;

const Row = styled.tr`
  height: ${({ $height }) => $height}px;
`;

const ColHead = styled.th`
  padding: 1px 0 0;
  border-right: 1px solid #d0d0d0;
  border-bottom: ${({ $active }) => ($active ? "2px solid #5aa02c" : "1px solid #c4c4c4")};
  background: ${({ $active }) => ($active ? "#d7e6cf" : "#f0f0f0")};
  color: ${({ $active }) => ($active ? "#2f8a00" : "#555")};
  font: 12px/13px "Liberation Mono", monospace;

  &:last-child {
    border-right: 0;
  }
`;

const Corner = styled.td`
  padding: 0;
  border-right: 1px solid #c4c4c4;
  border-bottom: 1px solid #c4c4c4;
  background: linear-gradient(135deg, #f0f0f0 50%, #b8b8b8 50%) 18px 5px / 8px 8px no-repeat #f0f0f0;
`;

const RowHead = styled.th`
  padding: 2px 0 0;
  border-right: ${({ $active }) => ($active ? "2px solid #5aa02c" : "1px solid #c4c4c4")};
  border-bottom: 1px solid #dcdcdc;
  background: ${({ $active }) => ($active ? "#d7e6cf" : "#f0f0f0")};
  color: ${({ $active }) => ($active ? "#2f8a00" : "#555")};
  font: 12px/14px "Liberation Mono", monospace;
`;

const Blank = styled.td`
  padding: 0;
  border-right: 1px solid #c6c6c6;
  border-bottom: 1px solid #c6c6c6;

  &:last-child {
    border-right: 0;
  }
`;

const Cell = styled.td`
  padding: 0 0 0 3px;
  border-right: 1px solid #000;
  border-bottom: 1px solid #000;
  background: ${({ $color }) => $color || "#fff"};
  vertical-align: top;
`;

const NameCell = styled(Cell)`
  padding: 2px 0 0;
  font-weight: bold;
  text-align: center;
  vertical-align: middle;
`;

const TitleCell = styled(NameCell)`
  padding: 0;
  color: #f00;
  line-height: 26px;
`;

const SelectedCell = styled(TitleCell)`
  position: relative;

  &::after {
    content: "";
    position: absolute;
    inset: -2px;
    z-index: 2;
    border: 3px solid #5aa02c;
  }
`;

const FillHandle = styled.span`
  position: absolute;
  right: -4px;
  bottom: -4px;
  z-index: 3;
  width: 7px;
  height: 7px;
  border: 1px solid #fff;
  background: #5aa02c;
`;

/* Two lines fill the short rows completely, the last pixel runs under the border. */
const CellText = styled.div`
  display: flex;
  flex-direction: column;
  margin-bottom: -1px;
  white-space: nowrap;
`;

const FreezeColumnLine = styled.div`
  position: absolute;
  top: 0;
  bottom: 0;
  left: 220px;
  width: 1px;
  background: #5aa02c;
`;

const FreezeRowLine = styled.div`
  position: absolute;
  top: 43px;
  right: 0;
  left: 30px;
  height: 1px;
  background: #5aa02c;
`;

const Overlay = styled.svg`
  position: absolute;
  top: 0;
  left: 0;
  z-index: 10;
  pointer-events: none;
`;
